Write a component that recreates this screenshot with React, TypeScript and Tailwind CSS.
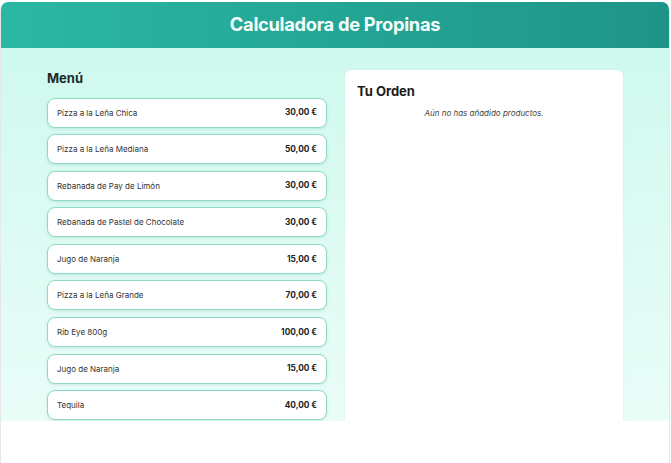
const menu = [
  { name: "Pizza a la Leña Chica", price: "30,00 €" },
  { name: "Pizza a la Leña Mediana", price: "50,00 €" },
  { name: "Rebanada de Pay de Limón", price: "30,00 €" },
  { name: "Rebanada de Pastel de Chocolate", price: "30,00 €" },
  { name: "Jugo de Naranja", price: "15,00 €" },
  { name: "Pizza a la Leña Grande", price: "70,00 €" },
  { name: "Rib Eye 800g", price: "100,00 €" },
  { name: "Jugo de Naranja", price: "15,00 €" },
  { name: "Tequila", price: "40,00 €" },
];

export default function App() {
  return (
    <div className="h-[463px] w-[671px] bg-white pt-[2px] font-['Inter',sans-serif]">
      <div className="flex h-[461px] w-[670px] flex-col overflow-hidden rounded-t-lg border-x border-gray-200 bg-white">
        <header className="flex h-[46px] shrink-0 items-center justify-center bg-gradient-to-r from-[#2bb8a3] to-[#1e9487]">
          <h1 className="text-[18.3px] font-bold tracking-[-0.3px] text-[#f4fffc]">
            Calculadora de Propinas
          </h1>
        </header>

        <main className="flex h-[373px] shrink-0 gap-[18px] overflow-hidden bg-gradient-to-b from-[#cff9ee] to-[#eafdf8] pl-[46px]">
          <section className="w-[280px] shrink-0 pt-[21px]">
            <h2 className="mb-[9px] text-[13px] font-bold text-[#1a2b2b]">Menú</h2>
            <div className="flex flex-col gap-[6.6px]">
              {menu.map((item, i) => (
                <button
                  key={i}
                  className="flex h-[30px] shrink-0 items-center justify-between rounded-lg border border-[#8edac6] bg-white px-[9px] text-left shadow-[0_1px_3px_rgba(20,120,100,0.15)]"
                >
                  <span className="text-[8px] text-[#333]">{item.name}</span>
                  <span className="text-[8.3px] font-bold text-[#222]">{item.price}</span>
                </button>
              ))}
            </div>
          </section>

          <section className="mt-[22px] h-[360px] w-[278px] shrink-0 rounded-md bg-white px-[12px] pt-[12px] shadow-[0_1px_4px_rgba(0,0,0,0.04)]">
            <h2 className="text-[13px] font-bold text-[#1b1b1b]">Tu Orden</h2>
            <p className="mt-[5px] text-center text-[8px] italic text-[#444]">
              Aún no has añadido productos.
            </p>
          </section>
        </main>

        <div className="flex-1 bg-white" />
      </div>
    </div>
  );
}
